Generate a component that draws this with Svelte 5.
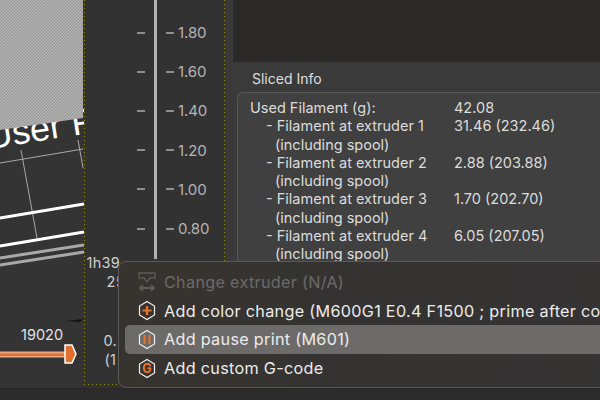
<script>
  const ticks = ['1.80', '1.60', '1.40', '1.20', '1.00', '0.80'];
  const rows = [
    ['Used Filament (g):', '42.08', 0],
    ['- Filament at extruder 1', '31.46 (232.46)', 1],
    ['(including spool)', '', 2],
    ['- Filament at extruder 2', '2.88 (203.88)', 1],
    ['(including spool)', '', 2],
    ['- Filament at extruder 3', '1.70 (202.70)', 1],
    ['(including spool)', '', 2],
    ['- Filament at extruder 4', '6.05 (207.05)', 1],
    ['(including spool)', '', 2]
  ];
  const hex = 'M9 1.5 L16.5 6 V15 L9 19.5 L1.5 15 V6 Z';
</script>

<div class="page">
  <div class="main">
    <svg class="view" width="84" height="388" viewBox="0 0 84 388">
      <defs>
        <pattern id="hatch" width="2.2" height="2.2" patternUnits="userSpaceOnUse" patternTransform="rotate(45)">
          <rect width="2.2" height="2.2" fill="#b6b6b6" />
          <rect width="0.9" height="2.2" fill="#919191" />
        </pattern>
      </defs>
      <text x="-12" y="146" class="bed" transform="rotate(-9 8 146)">User P</text>
      <polygon points="0,0 83,0 83,118 0,130" fill="url(#hatch)" />
      <g fill="none" stroke="#a9a9a9" stroke-width="1">
        <path d="M0 163 L83 149" />
        <path d="M21 150 L37 238" />
        <path d="M78 140 L83 168" />
      </g>
      <g fill="none" stroke="#fff" stroke-width="3">
        <path d="M0 218 L84 204" />
        <path d="M0 246 L84 232" />
      </g>
      <g fill="none" stroke="#a8a8a8" stroke-width="3">
        <path d="M0 258 L84 245" />
        <path d="M0 265 L84 252" />
      </g>
      <path d="M66 321 L83 319 L80 322 Z" fill="#111" />
      <text x="21" y="340" class="num">19020</text>
      <rect x="0" y="351.5" width="66" height="6" fill="#e8a782" />
      <rect x="0" y="353.5" width="66" height="2.5" fill="#e0702e" />
      <path d="M65 345 H72 L76 354 L72 363 H65 Z" fill="#e0702e" stroke="#fff" stroke-width="1.5" />
    </svg>

    <div class="slider">
      <div class="scale">
        <div class="marks">
          {#each ticks as t}<div class="row"><i></i></div>{/each}
        </div>
        <div class="rail"></div>
        <div class="marks labels">
          {#each ticks as t}<div class="row"><i></i><span>{t}</span></div>{/each}
        </div>
      </div>
      <div class="time first">1h39</div>
      <div class="time second">25</div>
      <div class="time third">0.</div>
      <div class="time fourth">(1</div>
    </div>

    <div class="gutter"></div>

    <div class="side">
      <div class="toppanel"></div>
      <div class="title">Sliced Info</div>
      <div class="box">
        {#each rows as r}
          <div class="line">
            <span class={'name l' + r[2]}>{r[0]}</span>
            <span class="val">{r[1]}</span>
          </div>
        {/each}
      </div>
    </div>
  </div>
  <div class="bottom"></div>

  <div class="menu">
    <div class="item disabled">
      <svg width="18" height="20" viewBox="0 0 18 20" fill="none" stroke="#5e5b59" stroke-width="1.3">
        <path d="M1 1 H17 V6 L12 6 L9 10 L6 6 H1 Z" />
        <path d="M2 16 H16 M5 13 L2 16 L5 19 M13 13 L16 16 L13 19" stroke-width="1.8" />
      </svg>
      <span>Change extruder (N/A)</span>
    </div>
    <div class="item">
      <svg width="18" height="21" viewBox="0 0 18 21" fill="none">
        <path d={hex} stroke="#f0f0f0" stroke-width="1.2" />
        <path d="M9 6 V15 M4.5 10.5 H13.5" stroke="#e8752c" stroke-width="2.2" />
      </svg>
      <span>Add color change (M600G1 E0.4 F1500 ; prime after color change)</span>
    </div>
    <div class="item active">
      <svg width="18" height="21" viewBox="0 0 18 21" fill="none">
        <path d={hex} stroke="#f0f0f0" stroke-width="1.2" />
        <path d="M6.5 6 V15 M11.5 6 V15" stroke="#e8752c" stroke-width="2" />
      </svg>
      <span>Add pause print (M601)</span>
    </div>
    <div class="item">
      <svg width="18" height="21" viewBox="0 0 18 21" fill="none">
        <path d={hex} stroke="#f0f0f0" stroke-width="1.2" />
        <text x="9" y="15" text-anchor="middle" class="g">G</text>
      </svg>
      <span>Add custom G-code</span>
    </div>
  </div>
</div>

<style>
  :global(body) {
    margin: 0;
    background: #333;
  }
  .page {
    position: relative;
    width: 600px;
    height: 400px;
    overflow: hidden;
    background: #333;
    color: #dcdcdc;
    font-family: Inter, "Liberation Sans", sans-serif;
  }
  .main {
    display: flex;
    height: 388px;
  }
  .view {
    flex: none;
    display: block;
    background: #343434;
  }
  .bed {
    font: 36px "Liberation Sans", sans-serif;
    fill: #fff;
  }
  .num {
    font: 14.5px Inter, sans-serif;
    fill: #e2e2e2;
  }
  .slider {
    flex: none;
    box-sizing: border-box;
    width: 141px;
    height: 385px;
    background-color: #323232;
    background-image:
      repeating-linear-gradient(to bottom, #8f8f1e 0 1px, transparent 1px 4px),
      repeating-linear-gradient(to bottom, #8f8f1e 0 1px, transparent 1px 4px),
      repeating-linear-gradient(to right, #8f8f1e 0 1px, transparent 1px 4px);
    background-size: 1px 100%, 1px 100%, 100% 1px;
    background-position: left top, right top, left bottom;
    background-repeat: no-repeat;
    padding-left: 1.5px;
  }
  .scale {
    display: flex;
    height: 259px;
    padding-left: 51px;
  }
  .marks {
    width: 8px;
    padding-top: 13px;
  }
  .row {
    display: flex;
    align-items: center;
    height: 39.2px;
    gap: 4px;
  }
  .row i {
    flex: none;
    width: 8px;
    height: 2px;
    background: #8e8e8e;
  }
  .rail {
    width: 3.5px;
    margin: 0 9px;
    background: #b2b2b2;
  }
  .labels {
    width: 50px;
    font-size: 15px;
    letter-spacing: -0.1px;
    color: #b5b5b5;
  }
  .time {
    height: 18.5px;
    line-height: 18.5px;
    font-size: 14.5px;
    color: #cfcfcf;
    padding-left: 1px;
    letter-spacing: 0.3px;
  }
  .first {
    margin-top: -5px;
  }
  .second {
    padding-left: 21px;
  }
  .third {
    padding-left: 18px;
    margin-top: 41px;
  }
  .fourth {
    padding-left: 19px;
  }
  .gutter {
    flex: none;
    width: 8px;
    background: #3a3a3a;
  }
  .side {
    flex: 1;
    min-width: 0;
    background: #3a3a3a;
  }
  .toppanel {
    height: 62px;
    background: #2b2a29;
  }
  .title {
    height: 30px;
    padding: 8px 0 0 19px;
    box-sizing: border-box;
    font-size: 14px;
    line-height: 17px;
    color: #dedede;
  }
  .box {
    box-sizing: border-box;
    height: 220px;
    margin-left: 4px;
    padding: 6px 0 0 12px;
    background: #404040;
    border: 1px solid #575757;
    border-right: 0;
    border-radius: 6px 0 0 6px;
  }
  .line {
    display: flex;
    height: 18.25px;
    line-height: 18.25px;
    font-size: 14.5px;
    color: #dcdcdc;
  }
  .name {
    box-sizing: border-box;
    width: 204px;
    white-space: nowrap;
  }
  .l1 {
    padding-left: 16px;
  }
  .l2 {
    padding-left: 25px;
  }
  .menu {
    position: absolute;
    left: 118px;
    top: 261px;
    box-sizing: border-box;
    width: 490px;
    height: 127px;
    padding: 6px 0 0 6px;
    background: linear-gradient(100deg, #38332f 0%, #353331 40%, #353434 100%);
    border: 1px solid #5a5957;
    border-radius: 8px;
  }
  .item {
    display: flex;
    align-items: center;
    height: 28.6px;
    white-space: nowrap;
    font-size: 16.2px;
    letter-spacing: 0.3px;
    color: #ececec;
    padding-left: 13px;
    gap: 8px;
    border-radius: 5px 0 0 5px;
  }
  .item svg {
    flex: none;
  }
  .disabled {
    color: #6c6a68;
  }
  .active {
    background: #6c6b69;
  }
  .g {
    font: bold 12.5px Inter, sans-serif;
    fill: #e8752c;
  }
  .bottom {
    height: 12px;
    background: #2c2c2c;
    border-top: 1px solid #262626;
  }
</style>
